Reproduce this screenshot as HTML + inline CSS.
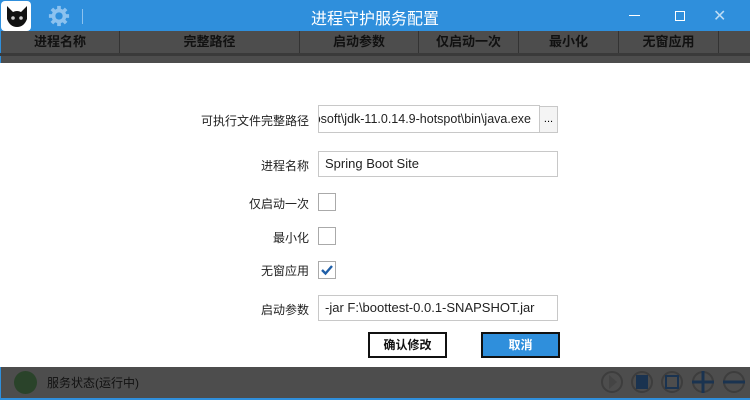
<!DOCTYPE html>
<html><head><meta charset="utf-8"><style>
*{margin:0;padding:0;box-sizing:border-box}
body{width:750px;height:400px;overflow:hidden;background:#fff;font-family:"Liberation Sans","Noto Sans CJK SC",sans-serif;position:relative}
.a{position:absolute}
.title{left:0;top:0;width:750px;height:31px;background:#2f8fdc}
.hdr{left:0;top:31px;width:750px;height:22px;background:#4d4d4d;border-left:1px solid #2f8fdc}
.hdr div{position:absolute;top:0;height:22px;line-height:22px;text-align:center;font-size:13px;font-weight:bold;color:#111;border-right:1px solid #333}
.lbl{font-size:12px;color:#222;text-align:right;width:200px;left:109px}
.inp{border:1px solid #c8c8c8;background:#fff;font-size:13px;color:#222;padding-left:6px;line-height:26px;overflow:hidden;white-space:nowrap}
.cb{width:18px;height:18px;border:1px solid #aaa;background:#fff}
.btn{height:26px;font-size:12px;font-weight:bold;text-align:center;line-height:22px;border:2px solid #111}
</style></head><body>
<div class="a title"></div>
<div class="a" style="left:1px;top:1px;width:30px;height:30px;background:#fff;border-radius:4px"></div>
<svg class="a" style="left:4px;top:3px" width="26" height="26" viewBox="0 0 26 26"><path d="M3 3 L9 9 Q13 7 17 9 L23 3 L23 16 Q20 24 13 24 Q6 24 3 16Z" fill="#111"/><circle cx="9" cy="15" r="1.8" fill="#ccc"/><circle cx="17" cy="15" r="1.8" fill="#ccc"/></svg>
<svg class="a" style="left:47px;top:5px" width="24" height="22" viewBox="0 0 24 24"><g fill="#8cc2ef"><circle cx="12" cy="12" r="8"/><rect x="10" y="1" width="4" height="22"/><rect x="1" y="10" width="22" height="4"/><rect x="10" y="1" width="4" height="22" transform="rotate(45 12 12)"/><rect x="10" y="1" width="4" height="22" transform="rotate(-45 12 12)"/></g><circle cx="12" cy="12" r="4" fill="#2f8fdc"/></svg>
<div class="a" style="left:82px;top:9px;width:1px;height:15px;background:#8cc2ef"></div>
<div class="a" style="left:0;top:5px;width:750px;text-align:center;font-size:16px;color:#fff">进程守护服务配置</div>
<div class="a" style="left:629px;top:15px;width:11px;height:1px;background:#fff"></div>
<div class="a" style="left:675px;top:11px;width:10px;height:10px;border:1px solid #fff"></div>
<div class="a" style="left:713px;top:6px;font-size:16px;color:#bcdcf5">✕</div>
<div class="a hdr">
<div style="left:0;width:119px">进程名称</div>
<div style="left:119px;width:180px">完整路径</div>
<div style="left:299px;width:119px">启动参数</div>
<div style="left:418px;width:100px">仅启动一次</div>
<div style="left:518px;width:100px">最小化</div>
<div style="left:618px;width:100px">无窗应用</div>
</div>
<div class="a" style="left:0;top:53px;width:750px;height:3px;background:#3a3a3a"></div>
<div class="a" style="left:0;top:56px;width:750px;height:7px;background:#4d4d4d;border-left:1px solid #2f8fdc"></div>

<div class="a lbl" style="top:112px">可执行文件完整路径</div>
<div class="a inp" style="left:318px;top:105px;width:222px;height:28px;direction:rtl;text-align:left;padding-left:0;padding-right:8px;font-size:12.5px"><span style="direction:ltr;unicode-bidi:embed">C:\Program Files\Microsoft\jdk-11.0.14.9-hotspot\bin\java.exe</span></div>
<div class="a" style="left:539px;top:106px;width:19px;height:27px;border:1px solid #c8c8c8;background:#f4f4f4;font-size:11px;text-align:center;line-height:24px">...</div>
<div class="a lbl" style="top:157px">进程名称</div>
<div class="a inp" style="left:318px;top:151px;width:240px;height:26px;line-height:24px">Spring Boot Site</div>
<div class="a lbl" style="top:195px">仅启动一次</div>
<div class="a cb" style="left:318px;top:193px"></div>
<div class="a lbl" style="top:229px">最小化</div>
<div class="a cb" style="left:318px;top:227px"></div>
<div class="a lbl" style="top:262px">无窗应用</div>
<div class="a cb" style="left:318px;top:261px"><svg width="16" height="16" viewBox="0 0 16 16"><path d="M3 8 L6.5 11.5 L13 4" stroke="#1f5fa8" stroke-width="2.4" fill="none"/></svg></div>
<div class="a lbl" style="top:301px">启动参数</div>
<div class="a inp" style="left:318px;top:295px;width:240px;height:26px;line-height:24px">-jar F:\boottest-0.0.1-SNAPSHOT.jar</div>
<div class="a btn" style="left:368px;top:332px;width:79px;background:#fff;color:#111">确认修改</div>
<div class="a btn" style="left:481px;top:332px;width:79px;background:#2f8fdc;color:#fff">取消</div>

<div class="a" style="left:0;top:367px;width:750px;height:33px;background:#4d4d4d;border-left:1px solid #2f8fdc;border-bottom:2px solid #2f8fdc"></div>
<div class="a" style="left:14px;top:371px;width:23px;height:23px;border-radius:50%;background:#2a432a"></div>
<div class="a" style="left:47px;top:374px;font-size:12px;color:#111">服务状态(运行中)</div>
<svg class="a" style="left:600px;top:370px" width="150" height="26" viewBox="0 0 150 26">
<g fill="none" stroke="#3d3d3d" stroke-width="2"><circle cx="12" cy="12" r="10"/><circle cx="42" cy="12" r="10"/><circle cx="72" cy="12" r="10"/><circle cx="103" cy="12" r="10"/><circle cx="134" cy="12" r="10"/></g>
<path d="M9 5 L17 12 L9 19Z" fill="#444"/>
<rect x="36" y="5" width="12" height="14" fill="#1a3350"/>
<rect x="66" y="6" width="12" height="12" fill="none" stroke="#1a3350" stroke-width="2"/>
<path d="M92 12 H114 M103 1 V23 M123 12 H145" stroke="#1a3350" stroke-width="3"/>
</svg>
</body></html>
